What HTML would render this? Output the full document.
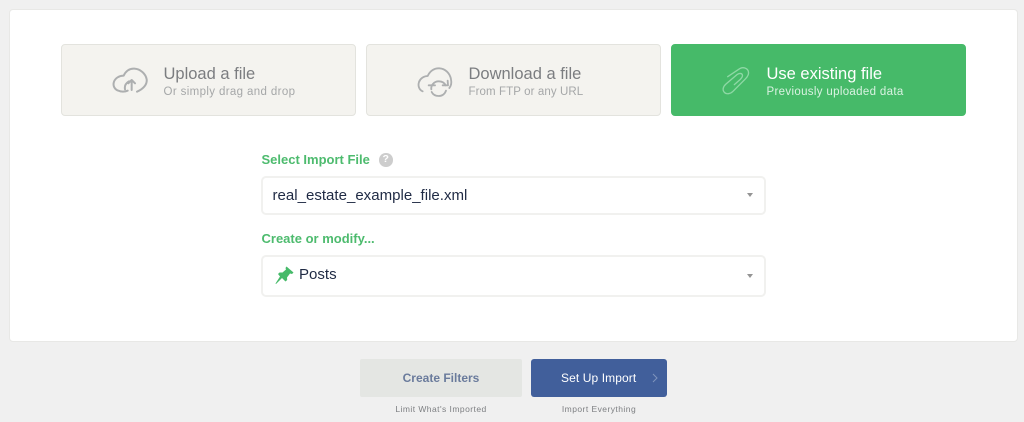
<!DOCTYPE html>
<html>
<head>
<meta charset="utf-8">
<style>
html,body{margin:0;padding:0;width:1024px;height:422px;overflow:hidden;background:#f0f0f0;font-family:"Liberation Sans",sans-serif}
.a{position:absolute;white-space:nowrap}
#card{left:9px;top:9px;width:1007px;height:331px;background:#fff;border:1px solid #e8e8e6;border-radius:4px}
.box{box-sizing:border-box;height:72px;top:44px;border-radius:4px;background:#f4f3ef;border:1px solid #e3e3de}
.t{font-size:16.5px;color:#7b7d80;top:65px;line-height:18px}
.s{font-size:11.5px;color:#a5a7a8;top:85px;line-height:14px;letter-spacing:.37px}
.lab{font-size:13px;font-weight:bold;color:#4dbb6e;line-height:14px}
.sel{box-sizing:border-box;left:261px;width:505px;background:#fff;border:2px solid #f1f1ef;border-radius:5px}
.arr{width:0;height:0;border-left:3.5px solid transparent;border-right:3.5px solid transparent;border-top:4px solid #949494}
.val{font-size:15.05px;color:#1f2a44;line-height:18px}
svg{position:absolute;overflow:visible}
</style>
</head>
<body>
<div class="a" id="card"></div>

<div class="a box" style="left:61px;width:295px"></div>
<div class="a box" style="left:366px;width:295px"></div>
<div class="a box" style="left:671px;width:295px;background:#46ba69;border-color:#46ba69"></div>

<svg style="left:105px;top:60px" width="50" height="40" viewBox="0 0 150 120" fill="none" stroke="#adafb0" stroke-width="6" stroke-linecap="round" stroke-linejoin="round">
<path d="M68 92C60 96 48 96 40 92C28 88 23 76 27 65C31 54 43 47 56 47C62 33 74 25 88 26C106 27 122 41 125 58C127 73 115 87 96 95"/>
<path d="M60 88C58 78 62 70 72 64"/>
<path d="M80 90V60M70 70L80 60L90 70"/>
</svg>

<svg style="left:410px;top:60px" width="50" height="40" viewBox="0 0 150 120" fill="none" stroke="#adafb0" stroke-width="5.500" stroke-linecap="round" stroke-linejoin="round">
<path d="M38 94C28 90 23 78 27 66C31 55 42 48 53 48C60 33 73 24 88 25C106 26 120 40 123 58C125 68 123 78 118 84"/>
<path d="M64 88C62 76 72 64 86 64C96 64 103 68 107 76"/>
<path d="M98 76H114L113 62"/>
<path d="M108 92C105 102 96 108 86 108C76 108 69 104 65 96"/>
<path d="M56 76H75"/>
</svg>

<svg style="left:715px;top:60px" width="50" height="40" viewBox="0 0 150 120" fill="none" stroke="#8ed8a5" stroke-width="4" stroke-linecap="round" stroke-linejoin="round">
<path d="M38 50L74 26C84 20 97 24 100 34C103 42 98 50 90 58L54 94C46 102 34 104 28 97C21 89 25 79 33 72L66 44C72 39 80 39 82 44C84 49 80 54 76 58L58 74"/>
</svg>

<div class="a t" style="left:163.500px">Upload a file</div>
<div class="a s" style="left:163.500px">Or simply drag and drop</div>
<div class="a t" style="left:468.500px">Download a file</div>
<div class="a s" style="left:468.500px;letter-spacing:.1px">From FTP or any URL</div>
<div class="a t" style="left:766.500px;color:#fff">Use existing file</div>
<div class="a s" style="left:766.500px;color:#d9f2e1;letter-spacing:.33px">Previously uploaded data</div>

<div class="a lab" style="left:261.500px;top:152.500px">Select Import File</div>
<div class="a" style="left:379px;top:153px;width:13.500px;height:13.500px;border-radius:50%;background:#cdcdcd;color:#fff;font-size:10.500px;font-weight:bold;line-height:13.500px;text-align:center">?</div>

<div class="a sel" style="top:176px;height:39px"></div>
<div class="a val" style="left:272.500px;top:187px">real_estate_example_file.xml</div>
<div class="a arr" style="left:747px;top:193px"></div>

<div class="a lab" style="left:261.500px;top:232px">Create or modify...</div>

<div class="a sel" style="top:255px;height:42px"></div>
<svg style="left:275px;top:266px" width="19" height="19" viewBox="0 0 19 19"><path fill="#46ba69" d="M11.500 .5L18.500 6.500L17 8L15 7.500L12 11.500L12.200 14L10.500 15.500L7 12L1 18L.5 17.500L5 10.500L3 8L4.500 6.500L7.500 6.500L11 3.500L10.500 2Z"/></svg>
<div class="a val" style="left:299px;top:266px">Posts</div>
<div class="a arr" style="left:747px;top:274px"></div>

<div class="a" style="left:360px;top:359px;width:162px;height:38px;background:#e4e6e3;border-radius:2px;text-align:center;font-size:12px;font-weight:bold;color:#6a7b9c;line-height:38px">Create Filters</div>
<div class="a" style="left:531px;top:359px;width:136px;height:38px;background:#415f9b;border-radius:3px"></div>
<div class="a" style="left:561px;top:359px;font-size:12px;color:#fff;line-height:38px;letter-spacing:.1px">Set Up Import</div>
<svg style="left:652px;top:373px" width="6" height="10" viewBox="0 0 6 10" fill="none" stroke="#7f94bd" stroke-width="1"><path d="M1 1L5 5L1 9"/></svg>

<div class="a" style="left:350px;width:182px;top:404px;text-align:center;font-size:8.500px;color:#7d7f82;line-height:11px;letter-spacing:.45px">Limit What's Imported</div>
<div class="a" style="left:531px;width:136px;top:404px;text-align:center;font-size:8.500px;color:#7d7f82;line-height:11px;letter-spacing:.45px">Import Everything</div>
</body>
</html>
